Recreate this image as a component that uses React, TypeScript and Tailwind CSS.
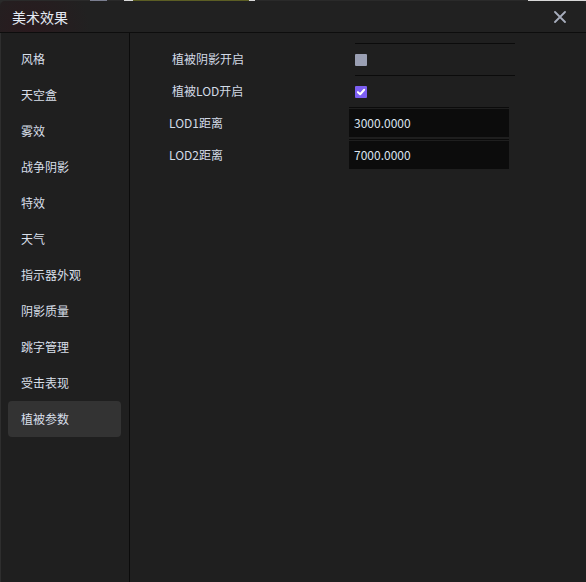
import { FC } from 'react';

const NAV_ITEMS = ['风格', '天空盒', '雾效', '战争阴影', '特效', '天气', '指示器外观', '阴影质量', '跳字管理', '受击表现', '植被参数'];

const FONT = { fontFamily: '"Microsoft YaHei", "Noto Sans CJK SC", "Noto Sans", sans-serif' };

const CheckRow: FC<{ label: string; checked: boolean }> = ({ label, checked }) => (
  <div className="flex h-8 items-center pl-[42px]">
    <span className="w-[183px] text-[12px] text-[#d2dae6]">{label}</span>
    <div className="flex h-full w-[160px] items-center border-t border-[#0b0b0b]">
      {checked ? (
        <span className="flex h-3 w-3 items-center justify-center rounded-[1px] bg-[#7c5ff2]">
          <svg viewBox="0 0 12 12" className="h-[10px] w-[10px]">
            <path d="M2.3 6.2 L5 8.7 L9.8 3.3" fill="none" stroke="#fff" strokeWidth="2.4" strokeLinecap="round" strokeLinejoin="round" />
          </svg>
        </span>
      ) : (
        <span className="h-3 w-3 rounded-[1px] bg-[#9a9fb3]" />
      )}
    </div>
  </div>
);

const InputRow: FC<{ label: string; value: string }> = ({ label, value }) => (
  <div className="flex h-8 items-start pl-[39px]">
    <span className="flex h-8 w-[180px] items-center text-[12px] text-[#d2dae6]">{label}</span>
    <div className="w-[160px] border-t border-[#0b0b0b] pt-[1px]">
      <div className="flex h-[28px] items-center bg-[#0c0c0c] px-[5px] text-[12px] text-[#dbe3ef]">{value}</div>
    </div>
  </div>
);

export default function App() {
  return (
    <div className="flex h-[582px] w-[586px] flex-col overflow-hidden bg-[#2a2a2a]" style={FONT}>
      {/* backdrop strip behind the window */}
      <div className="flex h-[1px] shrink-0">
        <div className="w-[90px] bg-[#2a2a2a]" />
        <div className="w-[17px] bg-[#7a7e90]" />
        <div className="w-[17px] bg-[#2a2a2a]" />
        <div className="w-[9px] bg-[#d8d8d8]" />
        <div className="w-[116px] bg-[#5c5e24]" />
        <div className="w-[6px] bg-[#d8d8d8]" />
        <div className="w-[273px] bg-[#2a2a2a]" />
        <div className="flex-1 bg-[#d8d8d8]" />
      </div>

      <div className="flex flex-1 flex-col overflow-hidden rounded-t-[5px] bg-[#1f1f1f] shadow-[inset_1px_0_0_#2e2e2e]">
        {/* Title bar */}
        <div className="flex h-8 shrink-0 items-center justify-between border-b border-[#0d0d0d] bg-[radial-gradient(circle_at_30px_30px,#2a1a1e_0%,#212121_60px)] pl-[12px] pr-[20px] pt-[1px]">
          <span className="text-[14px] text-[#e4eaf4]">美术效果</span>
          <svg viewBox="0 0 12 12" className="h-3 w-3">
            <path d="M1 1 L11 11 M11 1 L1 11" stroke="#a7adbc" strokeWidth="1.8" strokeLinecap="round" />
          </svg>
        </div>

        <div className="flex flex-1">
          {/* Sidebar */}
          <div className="flex w-[130px] shrink-0 flex-col border-r border-[#0b0b0b] px-2 pt-[8px]">
            {NAV_ITEMS.map((item, i) => (
              <div
                key={item}
                className={
                  i === NAV_ITEMS.length - 1
                    ? 'flex h-9 items-center rounded-[4px] bg-[#333333] pl-[13px] text-[12px] text-[#d8dfe9]'
                    : 'flex h-9 items-center pl-[13px] text-[12px] text-[#d8dfe9]'
                }
              >
                {item}
              </div>
            ))}
          </div>

          {/* Content */}
          <div className="flex flex-1 flex-col pt-[10px]">
            <CheckRow label="植被阴影开启" checked={false} />
            <CheckRow label="植被LOD开启" checked />
            <InputRow label="LOD1距离" value="3000.0000" />
            <InputRow label="LOD2距离" value="7000.0000" />
          </div>
        </div>
      </div>
    </div>
  );
}
